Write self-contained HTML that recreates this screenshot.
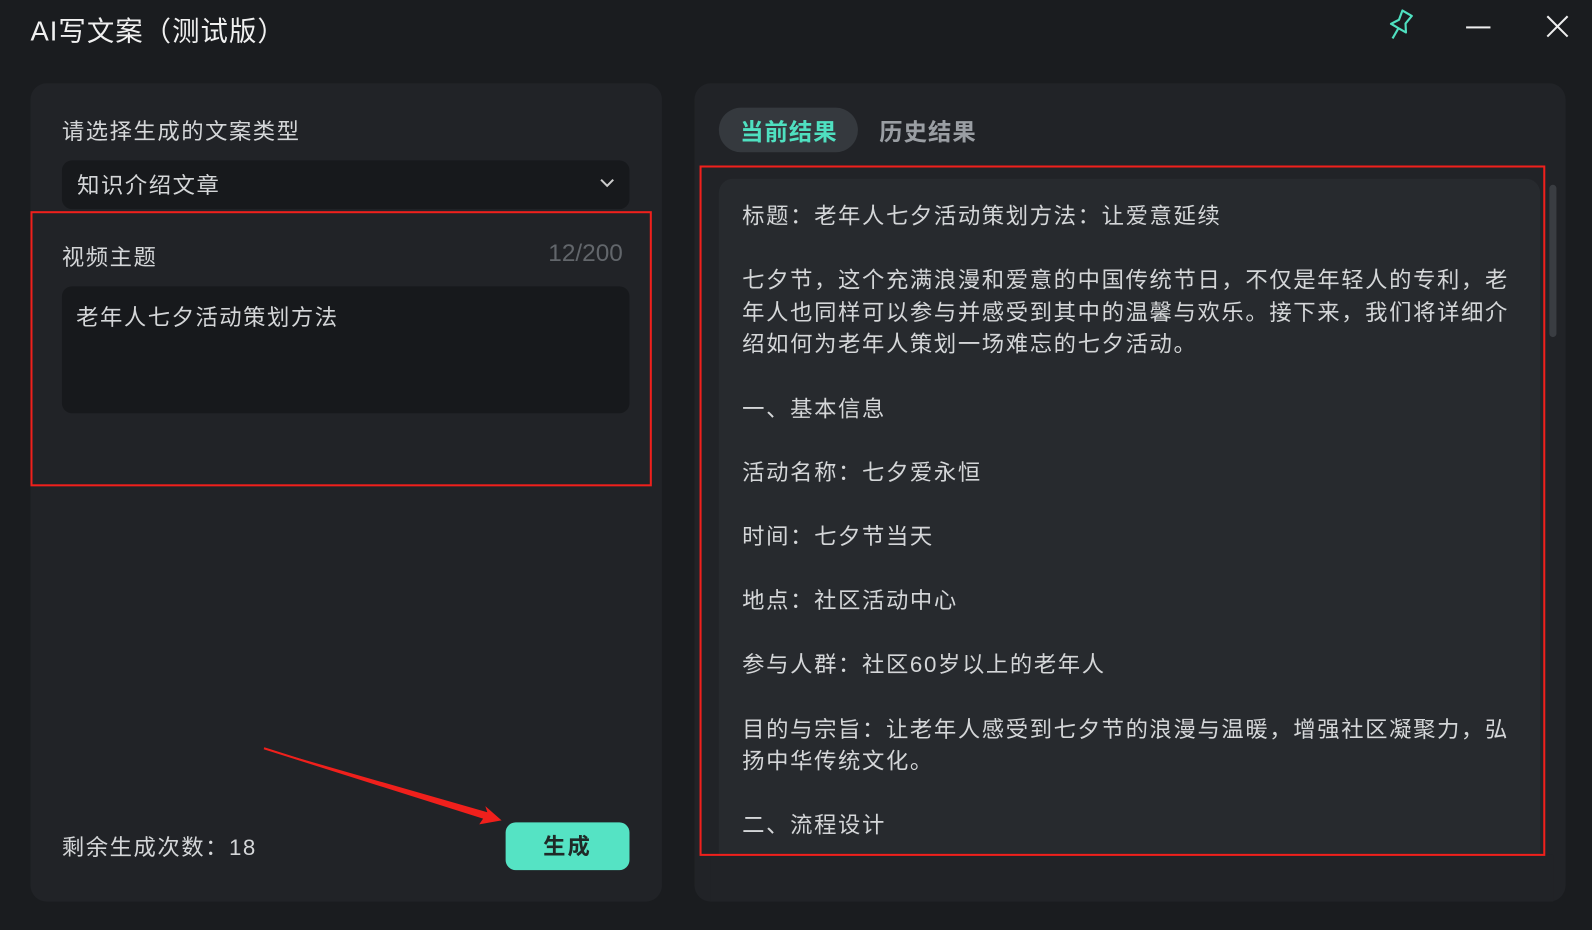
<!DOCTYPE html>
<html><head><meta charset="utf-8"><style>
*{margin:0;padding:0;box-sizing:border-box}
body{width:1592px;height:930px;background:#1a1c1f;font-family:"Liberation Sans","Noto Sans CJK SC",sans-serif;color:#d4d6d8;overflow:hidden}
#w{position:relative;width:1568px;height:916px;transform:scale(1.0153);transform-origin:0 0}
.a{position:absolute}
.t{font-size:22px;white-space:nowrap;letter-spacing:1.5px}
</style></head><body><div id="w">
<div class="a" style="left:30px;top:9px;font-size:27px;color:#f0f0f0;letter-spacing:1px">AI写文案（测试版）</div>
<svg class="a" style="left:1362px;top:8px" width="34" height="34" viewBox="0 0 32 32"><g transform="rotate(30 16 16)" fill="none" stroke="#4fe0c0" stroke-width="2" stroke-linejoin="round"><path d="M11 3 H21 L19.5 12 L24 19 H8 L12.5 12 Z"/><path d="M16 19 V30"/></g></svg>
<div class="a" style="left:1444px;top:26px;width:24px;height:2px;background:#eee"></div>
<svg class="a" style="left:1522px;top:14px" width="24" height="24"><path d="M2 2L22 22M22 2L2 22" stroke="#eee" stroke-width="2"/></svg>

<div class="a" style="left:30px;top:82px;width:622px;height:806px;background:#212327;border-radius:16px"></div>
<div class="a t" style="left:61px;top:112px">请选择生成的文案类型</div>
<div class="a" style="left:61px;top:158px;width:559px;height:48px;background:#17191c;border-radius:10px"></div>
<div class="a t" style="left:76px;top:165px">知识介绍文章</div>
<svg class="a" style="left:590px;top:174px" width="16" height="12"><path d="M2 3L8 9L14 3" fill="none" stroke="#ccc" stroke-width="2"/></svg>
<div class="a" style="left:30px;top:208px;width:612px;height:271px;border:2px solid #f0201c"></div>
<div class="a t" style="left:61px;top:236px">视频主题</div>
<div class="a" style="left:540px;top:236px;font-size:24px;color:#62666b">12/200</div>
<div class="a" style="left:61px;top:282px;width:559px;height:125px;background:#17191c;border-radius:10px"></div>
<div class="a t" style="left:75px;top:295px">老年人七夕活动策划方法</div>
<div class="a t" style="left:61px;top:817px">剩余生成次数：18</div>
<div class="a" style="left:498px;top:810px;width:122px;height:47px;background:#55e3c4;border-radius:10px;text-align:center;line-height:47px;font-size:22px;font-weight:bold;color:#1f2a28;letter-spacing:2px">生成</div>
<svg class="a" style="left:0;top:0" width="700" height="900"><path d="M260 737 L480 800 L478 794 L494 808 L472 812 L476 806 Z" fill="#f0201c"/><path d="M260 737 L478 806" stroke="#f0201c" stroke-width="2"/></svg>

<div class="a" style="left:684px;top:82px;width:858px;height:806px;background:#212327;border-radius:16px"></div>
<div class="a" style="left:708px;top:106px;width:137px;height:44px;background:#35393e;border-radius:22px"></div>
<div class="a" style="left:729px;top:111px;font-size:23px;font-weight:bold;color:#4fe0c0;letter-spacing:1px">当前结果</div>
<div class="a" style="left:866px;top:111px;font-size:23px;font-weight:bold;color:#9a9ea3;letter-spacing:1px">历史结果</div>
<div class="a" style="left:708px;top:176px;width:809px;height:666px;background:#272a2e;border-radius:14px 14px 0 0"></div>
<div class="a" style="left:1526px;top:182px;width:7px;height:150px;background:#3a3d42;border-radius:4px"></div>
<div class="a" style="left:731px;top:197px;width:768px;font-size:22px;line-height:31.6px;color:#d4d6d8;letter-spacing:1.6px">
标题：老年人七夕活动策划方法：让爱意延续<br><br>
七夕节，这个充满浪漫和爱意的中国传统节日，不仅是年轻人的专利，老年人也同样可以参与并感受到其中的温馨与欢乐。接下来，我们将详细介绍如何为老年人策划一场难忘的七夕活动。<br><br>
一、基本信息<br><br>活动名称：七夕爱永恒<br><br>时间：七夕节当天<br><br>地点：社区活动中心<br><br>参与人群：社区60岁以上的老年人<br><br>
目的与宗旨：让老年人感受到七夕节的浪漫与温暖，增强社区凝聚力，弘扬中华传统文化。<br><br>二、流程设计</div>
<div class="a" style="left:700px;top:842px;width:830px;height:46px;background:#212327"></div>
<div class="a" style="left:689px;top:163px;width:833px;height:680px;border:2px solid #f0201c"></div>
</div></body></html>
